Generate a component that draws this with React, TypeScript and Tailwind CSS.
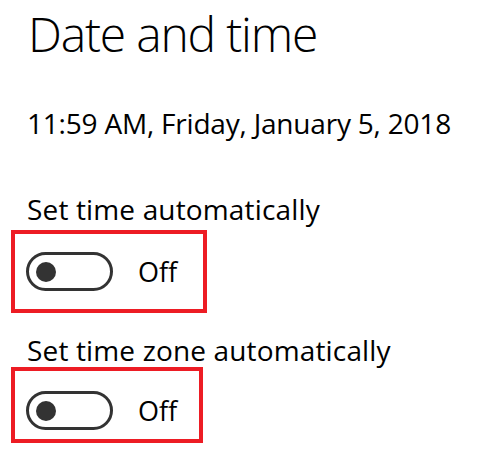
import React from "react";

function Toggle() {
  return (
    <div className="flex h-[39px] w-[87px] items-center rounded-full border-[3px] border-[#333333] pl-[7px]">
      <span className="h-[20px] w-[20px] rounded-full bg-[#333333]"></span>
    </div>
  );
}

function Setting({
  label,
  labelGap,
  topGap,
  boxClass,
}: {
  label: string;
  labelGap: string;
  topGap: string;
  boxClass: string;
}) {
  return (
    <div className={topGap}>
      <div className="pl-[27px] text-[28px] leading-[28px] tracking-[0.15px] text-black">{label}</div>
      <div className={`${labelGap} ml-[11px] border-4 border-[#ed1c24] ${boxClass}`}>
        <div className="flex items-center gap-[25px]">
          <Toggle />
          <span className="text-[27px] leading-[27px] text-black">Off</span>
        </div>
      </div>
    </div>
  );
}

export default function App() {
  return (
    <div
      className="h-[449px] w-[487px] overflow-hidden bg-white pt-[10px]"
      style={{ fontFamily: '"Open Sans", "Noto Sans", sans-serif' }}
    >
      <h1 className="pl-[28px] text-[48px] font-light leading-[48px] tracking-[-1.2px] text-black">
        Date and time
      </h1>
      <div className="mt-[51px] pl-[27px] text-[28px] leading-[28px] tracking-[-0.2px] text-black">
        11:59 AM, Friday, January 5, 2018
      </div>
      <Setting
        label="Set time automatically"
        topGap="mt-[58px]"
        labelGap="mt-[7px]"
        boxClass="h-[83px] w-[196px] pl-[11px] pt-[18px]"
      />
      <Setting
        label="Set time zone automatically"
        topGap="mt-[23px]"
        labelGap="mt-[3px]"
        boxClass="h-[76px] w-[192px] pl-[11px] pt-[20px]"
      />
    </div>
  );
}
